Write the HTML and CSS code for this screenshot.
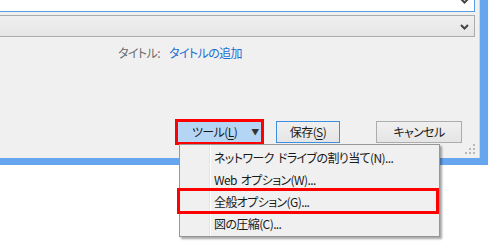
FILE: index.html
```html
<!DOCTYPE html>
<html>
<head>
    <title>保存ダイアログ</title>
    <meta charset="UTF-8">
    <link rel="stylesheet" href="styles.css">
</head>
<body>
    <div class="frame">
        <div class="window">
            <div class="field-top">
                <svg class="chev" width="9" height="6" viewBox="0 0 9 6"><path d="M1 0 L4.5 3.5 L8 0" fill="none" stroke="#444" stroke-width="2"/></svg>
            </div>
            <div class="combo">
                <svg class="chev" width="9" height="6" viewBox="0 0 9 6"><path d="M1 1 L4.5 4.5 L8 1" fill="none" stroke="#444" stroke-width="2"/></svg>
            </div>
            <div class="meta">
                <span class="meta-label">タイトル:</span>
                <span class="meta-value">タイトルの追加</span>
            </div>
            <div class="buttons">
                <button type="button" class="btn btn-tool"><span class="btn-text">ツール(<u>L</u>)</span><span class="arrow">▼</span></button>
                <button type="button" class="btn btn-save">保存(<u>S</u>)</button>
                <button type="button" class="btn btn-cancel">キャンセル</button>
            </div>
            <svg class="grip" width="11" height="11" viewBox="0 0 11 11">
                <rect x="8" y="0" width="2" height="2" fill="#b8b8b8"/>
                <rect x="4" y="4" width="2" height="2" fill="#b8b8b8"/>
                <rect x="8" y="4" width="2" height="2" fill="#b8b8b8"/>
                <rect x="0" y="8" width="2" height="2" fill="#b8b8b8"/>
                <rect x="4" y="8" width="2" height="2" fill="#b8b8b8"/>
                <rect x="8" y="8" width="2" height="2" fill="#b8b8b8"/>
            </svg>
        </div>
    </div>

    <div class="menu">
        <div class="menu-item">ネットワーク<span class="gap"></span>ドライブの割り当て(N)...</div>
        <div class="menu-item">Web<span class="gap"></span>オプション(W)...</div>
        <div class="menu-item">全般オプション(G)...</div>
        <div class="menu-item">図の圧縮(C)...</div>
    </div>
    <div class="mark"></div>
</body>
</html>
```

FILE: styles.css
```css
/* ダイアログ */
body {
    margin: 0;
    background-color: #ffffff;
    font-family: "Noto Sans CJK JP", "Liberation Sans", sans-serif;
    font-size: 12px;
    font-feature-settings: "palt";
    letter-spacing: -0.6px;
    color: #1a1a1a;
}
.frame {
    width: 480px;
    border-right: 8px solid #66a6ee;
    border-bottom: 7px solid #66a6ee;
    box-shadow: 0 1px 2px rgba(0, 0, 0, 0.08);
}
.window {
    position: relative;
    height: 158px;
    background-color: #f0f0f0;
    border-right: 1px solid #d4d4d4;
    overflow: hidden;
}
.field-top {
    position: relative;
    width: 474px;
    height: 11px;
    background-color: #ffffff;
    border-bottom: 1px solid #569de5;
    border-right: 1px solid #569de5;
}
.field-top .chev {
    position: absolute;
    right: 5px;
    top: -1px;
}
.combo {
    position: relative;
    width: 474px;
    height: 20px;
    margin-top: 3px;
    border: 1px solid #acacac;
    border-left: none;
    background: linear-gradient(#f0f0f0, #e5e5e5);
}
.combo .chev {
    position: absolute;
    right: 5px;
    top: 8px;
}
.meta {
    display: flex;
    margin-top: 7px;
    padding-left: 118px;
    line-height: 18px;
}
.meta-label {
    width: 51px;
    color: #6d6d6d;
}
.meta-value {
    color: #1c6fd6;
}
.buttons {
    display: flex;
    align-items: center;
    margin-top: 57px;
    padding-left: 175px;
}
.btn {
    box-sizing: border-box;
    height: 22px;
    padding: 0;
    font-family: inherit;
    font-size: 12px;
    font-feature-settings: "palt";
    letter-spacing: -0.6px;
    color: #1a1a1a;
    background: linear-gradient(#f0f0f0, #e5e5e5);
    border: 1px solid #acacac;
    line-height: 18px;
    white-space: nowrap;
}
.btn u {
    text-underline-offset: 2px;
}
.btn-tool {
    display: flex;
    align-items: center;
    width: 89px;
    height: 26px;
    padding-left: 14px;
    background: #b5d5f5;
    border: 3px solid #ff0000;
}
.btn-tool .btn-text {
    flex: none;
}
.btn-tool .arrow {
    flex: none;
    margin-left: 14px;
    font-size: 8px;
    color: #333;
}
.btn-save {
    width: 64px;
    margin-left: 12px;
    border-color: #3c8fe0;
}
.btn-cancel {
    width: 86px;
    margin-left: 36px;
}
.grip {
    position: absolute;
    right: 3px;
    bottom: 3px;
}
.menu {
    position: absolute;
    left: 179px;
    top: 144px;
    width: 259px;
    padding: 2px 0 1px;
    background: linear-gradient(90deg, #f0f0f0 29px, #e2e3e3 29px, #e2e3e3 30px, #ffffff 30px, #ffffff 31px, #f0f0f0 31px);
    border: 1px solid #979797;
    box-shadow: 2px 2px 2px rgba(0, 0, 0, 0.35);
}
.menu-item {
    height: 22px;
    line-height: 22px;
    padding-left: 34px;
    white-space: nowrap;
}
.gap {
    display: inline-block;
    width: 4px;
}
.mark {
    position: absolute;
    left: 177px;
    top: 188px;
    width: 256px;
    height: 20px;
    border: 3px solid #ff0000;
}
```
